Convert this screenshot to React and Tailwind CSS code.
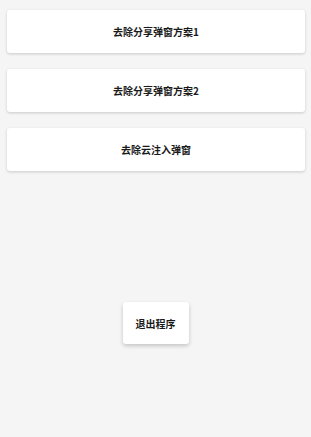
import React from "react";

const font = { fontFamily: '"Noto Sans CJK SC", "Noto Sans", sans-serif' };

const items = ["去除分享弹窗方案1", "去除分享弹窗方案2", "去除云注入弹窗"];

export default function App() {
  return (
    <div
      className="w-[311px] h-[437px] bg-[#f5f5f5] flex flex-col items-center pt-[10px]"
      style={font}
    >
      <div className="flex flex-col gap-[16px] w-full pl-[7px] pr-[6px]">
        {items.map((t) => (
          <button
            key={t}
            className="h-[43px] w-full bg-white rounded-[3px] shadow-[0_1px_3px_rgba(0,0,0,0.18)] text-[10px] font-semibold text-[#1a1a1a]"
          >
            {t}
          </button>
        ))}
      </div>

      {/* exit */}
      <button className="mt-[131px] w-[66px] h-[42px] bg-white rounded-[3px] shadow-[0_2px_4px_rgba(0,0,0,0.2)] text-[10px] font-semibold text-[#1a1a1a]">
        退出程序
      </button>
    </div>
  );
}
